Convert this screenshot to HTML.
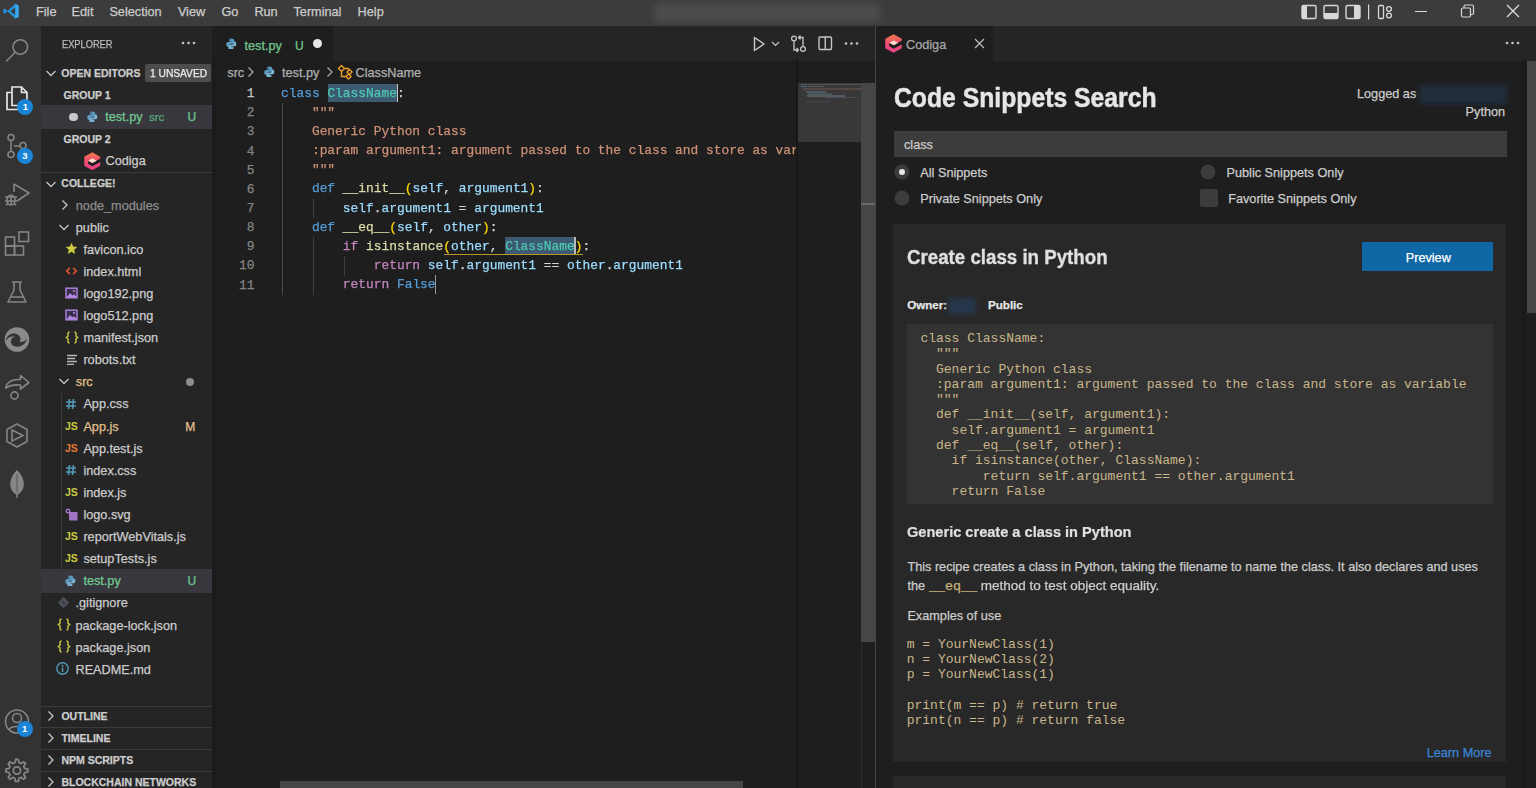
<!DOCTYPE html><html><head><meta charset="utf-8"><style>html,body{margin:0;padding:0;width:1536px;height:788px;overflow:hidden;background:#1e1e1e;}.t{position:absolute;white-space:pre;-webkit-text-stroke:0.25px currentColor;}</style></head><body><div style="position:absolute;left:0.00px;top:0.00px;width:1536.00px;height:26.00px;background:#3c3c3c;"></div>
<div style="position:absolute;left:0.00px;top:26.00px;width:41.00px;height:762.00px;background:#333333;"></div>
<div style="position:absolute;left:41.00px;top:26.00px;width:171.00px;height:762.00px;background:#252526;"></div>
<div style="position:absolute;left:212.00px;top:26.00px;width:663.00px;height:762.00px;background:#1e1e1e;"></div>
<div style="position:absolute;left:212.00px;top:26.00px;width:663.00px;height:35.00px;background:#252526;"></div>
<div style="position:absolute;left:212.00px;top:26.00px;width:121.00px;height:35.00px;background:#1e1e1e;"></div>
<div style="position:absolute;left:875.00px;top:26.00px;width:661.00px;height:762.00px;background:#1e1e1e;"></div>
<div style="position:absolute;left:875.00px;top:26.00px;width:661.00px;height:35.00px;background:#252526;"></div>
<div style="position:absolute;left:875.00px;top:26.00px;width:118.00px;height:35.00px;background:#1e1e1e;"></div>
<div style="position:absolute;left:874.50px;top:26.00px;width:1.00px;height:762.00px;background:#444444;"></div>
<svg style="position:absolute;left:1.50px;top:2.00px;" width="20" height="20" viewBox="0 0 20 20"><g transform="scale(0.92)"><path d="M14.5 2 L18 3.8 V16.2 L14.5 18 L6 10.2 L2.8 12.8 L1.5 12 V8 L2.8 7.2 L6 9.8 Z M14.5 6 L9 10 L14.5 14 Z" fill="#2493dd" fill-rule="evenodd"/><path d="M14.5 2 L18 3.8 V16.2 L14.5 18 Z" fill="#3aa8f0"/></g></svg>
<div class="t" style="left:36.00px;top:6px;font-size:12.7px;line-height:12.7px;color:#cccccc;font-family:'Liberation Sans', sans-serif;">File</div>
<div class="t" style="left:71.60px;top:6px;font-size:12.7px;line-height:12.7px;color:#cccccc;font-family:'Liberation Sans', sans-serif;">Edit</div>
<div class="t" style="left:109.40px;top:6px;font-size:12.7px;line-height:12.7px;color:#cccccc;font-family:'Liberation Sans', sans-serif;">Selection</div>
<div class="t" style="left:177.90px;top:6px;font-size:12.7px;line-height:12.7px;color:#cccccc;font-family:'Liberation Sans', sans-serif;">View</div>
<div class="t" style="left:221.40px;top:6px;font-size:12.7px;line-height:12.7px;color:#cccccc;font-family:'Liberation Sans', sans-serif;">Go</div>
<div class="t" style="left:254.40px;top:6px;font-size:12.7px;line-height:12.7px;color:#cccccc;font-family:'Liberation Sans', sans-serif;">Run</div>
<div class="t" style="left:293.50px;top:6px;font-size:12.7px;line-height:12.7px;color:#cccccc;font-family:'Liberation Sans', sans-serif;">Terminal</div>
<div class="t" style="left:357.60px;top:6px;font-size:12.7px;line-height:12.7px;color:#cccccc;font-family:'Liberation Sans', sans-serif;">Help</div>
<div style="position:absolute;left:654px;top:3px;width:226px;height:19px;background:#4c4c4c;filter:blur(3px);border-radius:3px"></div>
<svg style="position:absolute;left:1300.00px;top:4.00px;" width="96" height="16" viewBox="0 0 96 16"><rect x="2" y="1.5" width="14" height="13" rx="1.5" fill="none" stroke="#d8d8d8" stroke-width="1.4"/><rect x="2" y="1.5" width="5" height="13" fill="#d8d8d8"/><rect x="24" y="1.5" width="14" height="13" rx="1.5" fill="none" stroke="#d8d8d8" stroke-width="1.4"/><rect x="24" y="9" width="14" height="5.5" fill="#d8d8d8"/><rect x="46" y="1.5" width="14" height="13" rx="1.5" fill="none" stroke="#d8d8d8" stroke-width="1.4"/><rect x="54" y="1.5" width="6" height="13" fill="#d8d8d8"/><rect x="68" y="0.5" width="1.2" height="15" fill="#d8d8d8"/><rect x="78.5" y="1.5" width="5" height="13" rx="1" fill="none" stroke="#d8d8d8" stroke-width="1.3"/><circle cx="89" cy="5" r="2.4" fill="none" stroke="#d8d8d8" stroke-width="1.3"/><circle cx="89" cy="11.5" r="2.4" fill="none" stroke="#d8d8d8" stroke-width="1.3"/></svg>
<div style="position:absolute;left:1415.00px;top:10.50px;width:12.00px;height:1.20px;background:#d8d8d8;"></div>
<svg style="position:absolute;left:1459.00px;top:3.00px;" width="18" height="18" viewBox="0 0 18 18"><rect x="2.5" y="5" width="9" height="9" rx="1.5" fill="none" stroke="#d8d8d8" stroke-width="1.2"/><path d="M5 5 V3.5 A1.5 1.5 0 0 1 6.5 2 H13 A1.5 1.5 0 0 1 14.5 3.5 V10 A1.5 1.5 0 0 1 13 11.5 H11.5" fill="none" stroke="#d8d8d8" stroke-width="1.2"/></svg>
<svg style="position:absolute;left:1505.00px;top:3.00px;" width="16" height="16" viewBox="0 0 16 16"><path d="M2 2 L14 14 M14 2 L2 14" stroke="#d8d8d8" stroke-width="1.4"/></svg>
<svg style="position:absolute;left:5.00px;top:35.00px;" width="26" height="28" viewBox="0 0 26 28"><circle cx="15.3" cy="12" r="7.3" fill="none" stroke="#858585" stroke-width="1.6"/><path d="M10 17.5 L1.5 26" fill="none" stroke="#858585" stroke-width="1.6" stroke-linecap="round"/></svg>
<svg style="position:absolute;left:4.00px;top:85.00px;" width="26" height="28" viewBox="0 0 26 28"><path d="M7.5 7.5 H3 V24.5 H14 V20.5" fill="none" stroke="#e6e6e6" stroke-width="1.7"/><path d="M8 2 H17.5 L23 7.5 V20.5 H8 Z M17.5 2 V7.5 H23" fill="none" stroke="#e6e6e6" stroke-width="1.7"/></svg>
<svg style="position:absolute;left:4.00px;top:132.00px;" width="26" height="28" viewBox="0 0 26 28"><circle cx="7" cy="5.5" r="3" fill="none" stroke="#858585" stroke-width="1.6"/><circle cx="7" cy="22.5" r="3" fill="none" stroke="#858585" stroke-width="1.6"/><circle cx="19" cy="13.5" r="3" fill="none" stroke="#858585" stroke-width="1.6"/><path d="M7 8.5 V19.5 M10 14 H16" fill="none" stroke="#858585" stroke-width="1.6"/></svg>
<svg style="position:absolute;left:3.00px;top:180.00px;" width="28" height="28" viewBox="0 0 28 28"><path d="M11 4 L26 13 L14 21" fill="none" stroke="#858585" stroke-width="1.6" stroke-linejoin="round"/><path d="M11 4 V12" fill="none" stroke="#858585" stroke-width="1.6"/><ellipse cx="8" cy="20" rx="4" ry="5" fill="none" stroke="#858585" stroke-width="1.6"/><path d="M2 17 H14 M2 21 H14 M3 25 L5 23.5 M13 25 L11 23.5 M8 15 V25" fill="none" stroke="#858585" stroke-width="1.6" stroke-width="1.3"/></svg>
<svg style="position:absolute;left:4.00px;top:229.00px;" width="28" height="28" viewBox="0 0 28 28"><rect x="1.5" y="8" width="9" height="9" fill="none" stroke="#858585" stroke-width="1.6"/><rect x="1.5" y="17" width="9" height="9" fill="none" stroke="#858585" stroke-width="1.6"/><rect x="10.5" y="17" width="9" height="9" fill="none" stroke="#858585" stroke-width="1.6"/><rect x="15" y="3" width="9.5" height="9.5" fill="none" stroke="#858585" stroke-width="1.6"/></svg>
<svg style="position:absolute;left:5.00px;top:279.50px;" width="26" height="26" viewBox="0 0 26 26"><path d="M7 2 H17 M9 2 V10 L3 22 H21 L15 10 V2" fill="none" stroke="#858585" stroke-width="1.6" stroke-linejoin="round"/><path d="M5 17 H19" fill="none" stroke="#858585" stroke-width="1.6"/></svg>
<svg style="position:absolute;left:3.00px;top:325.00px;" width="30" height="30" viewBox="0 0 30 30"><circle cx="14" cy="14.5" r="12.3" fill="#8a8a8a"/><path d="M3 16 C3.5 10 9 7.5 13.5 9 C17.5 10.5 18.5 14.5 16.5 17 C19.5 17.5 22.5 16 24 13.5 C23 19 18 22.5 12.5 21.5 C9.5 21 7.5 18.5 8 15.5 C8.3 13.5 10 12 12 12 C8.5 10.5 4.5 12.5 3 16 Z" fill="#333333"/></svg>
<svg style="position:absolute;left:3.00px;top:372.00px;" width="28" height="28" viewBox="0 0 28 28"><path d="M2.5 16 C4 9.5 10 7 17.5 7.5 V3.5 L26 10.5 L17.5 17 V13 C11 12.5 6.5 13.5 2.5 16 Z" fill="none" stroke="#858585" stroke-width="1.6" stroke-linejoin="round"/><circle cx="11.5" cy="23.5" r="3.6" fill="none" stroke="#858585" stroke-width="1.6"/></svg>
<svg style="position:absolute;left:4.00px;top:422.00px;" width="26" height="28" viewBox="0 0 26 28"><path d="M13 2 L23 7.5 V19.5 L13 25 L3 19.5 V7.5 Z" fill="none" stroke="#858585" stroke-width="1.6"/><path d="M8 8 L19 13.5 L8 19 Z M8 8 V19" fill="none" stroke="#858585" stroke-width="1.6"/></svg>
<svg style="position:absolute;left:6.00px;top:468.00px;" width="22" height="32" viewBox="0 0 22 32"><path d="M11 2 C5 8 3.5 14 4.5 19 C5.5 23.5 9 26 11 27 C13 26 16.5 23.5 17.5 19 C18.5 14 17 8 11 2 Z" fill="#858585"/><rect x="10.3" y="20" width="1.4" height="10" fill="#858585"/><path d="M11 6 V24" stroke="#5a5a5a" stroke-width="1"/></svg>
<svg style="position:absolute;left:3.00px;top:707.00px;" width="30" height="30" viewBox="0 0 30 30"><circle cx="14" cy="14.5" r="11.5" fill="none" stroke="#858585" stroke-width="1.6"/><circle cx="14" cy="11" r="4.5" fill="none" stroke="#858585" stroke-width="1.6"/><path d="M6 22.5 C8 18.5 20 18.5 22 22.5" fill="none" stroke="#858585" stroke-width="1.6"/></svg>
<svg style="position:absolute;left:2.00px;top:755.50px;" width="30" height="30" viewBox="0 0 30 30"><g transform="translate(14.9 14.5) scale(1.13) translate(-12.9 -11.5)"><path d="M12 1.5 L14.2 1.8 L14.8 4.6 L16.6 5.4 L19 3.8 L20.6 5.4 L19 7.8 L19.8 9.6 L22.6 10.2 V12.8 L19.8 13.4 L19 15.2 L20.6 17.6 L19 19.2 L16.6 17.6 L14.8 18.4 L14.2 21.2 H11.6 L11 18.4 L9.2 17.6 L6.8 19.2 L5.2 17.6 L6.8 15.2 L6 13.4 L3.2 12.8 V10.2 L6 9.6 L6.8 7.8 L5.2 5.4 L6.8 3.8 L9.2 5.4 L11 4.6 Z" fill="none" stroke="#858585" stroke-width="1.6" stroke-width="1.5" stroke-linejoin="round"/><circle cx="12.9" cy="11.5" r="3.2" fill="none" stroke="#858585" stroke-width="1.6" stroke-width="1.5"/></g></svg>
<div style="position:absolute;left:17.4px;top:98.6px;width:16px;height:16px;border-radius:8px;background:#1a85d6;color:#fff;font:bold 9.5px/16px 'Liberation Sans',sans-serif;text-align:center">1</div>
<div style="position:absolute;left:17.0px;top:148.0px;width:16px;height:16px;border-radius:8px;background:#1a85d6;color:#fff;font:bold 9.5px/16px 'Liberation Sans',sans-serif;text-align:center">3</div>
<div style="position:absolute;left:16.7px;top:720.7px;width:16px;height:16px;border-radius:8px;background:#1a85d6;color:#fff;font:bold 9.5px/16px 'Liberation Sans',sans-serif;text-align:center">1</div>
<div class="t" style="left:61.70px;top:39px;font-size:10.6px;line-height:10.6px;color:#bbbbbb;font-family:'Liberation Sans', sans-serif;transform:scaleX(0.875);transform-origin:0 0;">EXPLORER</div>
<svg style="position:absolute;left:180.00px;top:38.00px;" width="18" height="10" viewBox="0 0 18 10"><circle cx="3" cy="5" r="1.3" fill="#c5c5c5"/><circle cx="8.5" cy="5" r="1.3" fill="#c5c5c5"/><circle cx="14" cy="5" r="1.3" fill="#c5c5c5"/></svg>
<div style="position:absolute;left:41.00px;top:105.30px;width:171.00px;height:23.30px;background:#37373d;"></div>
<div style="position:absolute;left:41.00px;top:569.40px;width:171.00px;height:23.30px;background:#37373d;"></div>
<div style="position:absolute;left:41.00px;top:172.00px;width:171.00px;height:1.00px;background:#3b3b3d;"></div>
<div style="position:absolute;left:41.00px;top:705.70px;width:171.00px;height:1.00px;background:#3b3b3d;"></div>
<div style="position:absolute;left:41.00px;top:727.30px;width:171.00px;height:1.00px;background:#3b3b3d;"></div>
<div style="position:absolute;left:41.00px;top:749.40px;width:171.00px;height:1.00px;background:#3b3b3d;"></div>
<div style="position:absolute;left:41.00px;top:771.30px;width:171.00px;height:1.00px;background:#3b3b3d;"></div>
<svg style="position:absolute;left:45.00px;top:68.11px;" width="12" height="10" viewBox="0 0 12 10"><path d="M1.5 3 L6 7.5 L10.5 3" fill="none" stroke="#c5c5c5" stroke-width="1.3"/></svg>
<div class="t" style="left:61.30px;top:68px;font-size:10.5px;line-height:10.5px;color:#cccccc;font-family:'Liberation Sans', sans-serif;font-weight:bold;">OPEN EDITORS</div>
<div style="position:absolute;left:145.00px;top:63.80px;width:65.50px;height:18.20px;background:#4d4d4d;border-radius:2px"></div>
<div class="t" style="left:149.80px;top:68px;font-size:10.8px;line-height:10.8px;color:#ececec;font-family:'Liberation Sans', sans-serif;transform:scaleX(0.945);transform-origin:0 0;">1 UNSAVED</div>
<div class="t" style="left:63.60px;top:90px;font-size:10.5px;line-height:10.5px;color:#cccccc;font-family:'Liberation Sans', sans-serif;font-weight:bold;">GROUP 1</div>
<div style="position:absolute;left:69px;top:112.7px;width:8.5px;height:8.5px;border-radius:5px;background:#c8c8c8"></div>
<svg style="position:absolute;left:87.00px;top:110.50px;" width="11" height="11" viewBox="0 0 11 11"><g transform="scale(0.880)"><path d="M5.8 0.5 C3.5 0.5 3.6 1.5 3.6 2.6 V4 H6.2 V4.6 H2.4 C1 4.6 0.3 5.7 0.3 7.3 C0.3 9 1 9.9 2.3 9.9 H3.3 V8.4 C3.3 7.3 4.2 6.5 5.3 6.5 H7.8 C8.7 6.5 9.3 5.9 9.3 5 V2.6 C9.3 1.5 8.3 0.5 5.8 0.5 Z M4.8 1.4 A0.5 0.5 0 1 1 4.79 1.4 Z" fill="#5a9cc4"/><path d="M6.2 13.5 C8.5 13.5 8.4 12.5 8.4 11.4 V10 H5.8 V9.4 H9.6 C11 9.4 11.7 8.3 11.7 6.7 C11.7 5 11 4.1 9.7 4.1 H8.7 V5.6 C8.7 6.7 7.8 7.5 6.7 7.5 H4.2 C3.3 7.5 2.7 8.1 2.7 9 V11.4 C2.7 12.5 3.7 13.5 6.2 13.5 Z" fill="#7ab2d2"/></g></svg>
<div class="t" style="left:105.20px;top:111px;font-size:12.7px;line-height:12.7px;color:#73c991;font-family:'Liberation Sans', sans-serif;">test.py</div>
<div class="t" style="left:148.90px;top:112px;font-size:11.5px;line-height:11.5px;color:#5fa57a;font-family:'Liberation Sans', sans-serif;">src</div>
<div class="t" style="left:187.40px;top:111px;font-size:12px;line-height:12px;color:#73c991;font-family:'Liberation Sans', sans-serif;">U</div>
<div class="t" style="left:63.60px;top:134px;font-size:10.5px;line-height:10.5px;color:#cccccc;font-family:'Liberation Sans', sans-serif;font-weight:bold;">GROUP 2</div>
<svg style="position:absolute;left:82.60px;top:152.00px;" width="18.5" height="18.5" viewBox="0 0 18.5 18.5"><defs><linearGradient id="cg82" x1="0" y1="0" x2="0" y2="1"><stop offset="0" stop-color="#f47a4a"/><stop offset="0.45" stop-color="#ee4f6f"/><stop offset="1" stop-color="#e8408a"/></linearGradient></defs><g transform="scale(1.028)"><path d="M9 0.3 L16.8 4.6 V13.4 L9 17.7 L1.2 13.4 V4.6 Z" fill="url(#cg82)"/><path d="M17.2 6.2 L9.2 10.6 L5 8.4 V11.6 L9.2 13.9 L17.2 9.6 Z" fill="#1e1e1e"/><path d="M5 8.4 L9.2 6.2 L13.4 8.4 L9.2 10.6 Z" fill="#f8dccc"/></g></svg>
<div class="t" style="left:105.50px;top:155px;font-size:12.7px;line-height:12.7px;color:#cccccc;font-family:'Liberation Sans', sans-serif;">Codiga</div>
<svg style="position:absolute;left:45.00px;top:178.61px;" width="12" height="10" viewBox="0 0 12 10"><path d="M1.5 3 L6 7.5 L10.5 3" fill="none" stroke="#c5c5c5" stroke-width="1.3"/></svg>
<div class="t" style="left:61.30px;top:178px;font-size:10.5px;line-height:10.5px;color:#cccccc;font-family:'Liberation Sans', sans-serif;font-weight:bold;">COLLEGE!</div>
<svg style="position:absolute;left:60.00px;top:199.10px;" width="10" height="12" viewBox="0 0 10 12"><path d="M2.5 1.5 L7 6 L2.5 10.5" fill="none" stroke="#c5c5c5" stroke-width="1.3"/></svg>
<div class="t" style="left:75.80px;top:200px;font-size:12.7px;line-height:12.7px;color:#8c8c8c;font-family:'Liberation Sans', sans-serif;">node_modules</div>
<svg style="position:absolute;left:58.00px;top:221.70px;" width="12" height="10" viewBox="0 0 12 10"><path d="M1.5 3 L6 7.5 L10.5 3" fill="none" stroke="#c5c5c5" stroke-width="1.3"/></svg>
<div class="t" style="left:75.80px;top:222px;font-size:12.7px;line-height:12.7px;color:#cccccc;font-family:'Liberation Sans', sans-serif;">public</div>
<svg style="position:absolute;left:64.50px;top:242.30px;" width="13" height="13" viewBox="0 0 13 13"><path d="M6.5 0.8 L8.2 4.6 L12.3 5 L9.2 7.8 L10.1 11.9 L6.5 9.8 L2.9 11.9 L3.8 7.8 L0.7 5 L4.8 4.6 Z" fill="#cbcb41"/></svg>
<div class="t" style="left:83.40px;top:244px;font-size:12.7px;line-height:12.7px;color:#cccccc;font-family:'Liberation Sans', sans-serif;">favicon.ico</div>
<svg style="position:absolute;left:64.50px;top:265.90px;" width="13" height="10" viewBox="0 0 13 10"><path d="M4.8 1.8 L1.8 5 L4.8 8.2 M8.2 1.8 L11.2 5 L8.2 8.2" fill="none" stroke="#d9502e" stroke-width="1.8"/></svg>
<div class="t" style="left:83.40px;top:266px;font-size:12.7px;line-height:12.7px;color:#cccccc;font-family:'Liberation Sans', sans-serif;">index.html</div>
<svg style="position:absolute;left:64.50px;top:286.50px;" width="13" height="12" viewBox="0 0 13 12"><rect x="1" y="1.2" width="11" height="9.6" fill="#3a2f4a" stroke="#a47ad0" stroke-width="1.6"/><path d="M1.5 10.5 L5 6 L7.5 8.5 L9 7 L12 10.5 Z" fill="#b48ae0"/><circle cx="9" cy="4" r="1.1" fill="#b48ae0"/></svg>
<div class="t" style="left:83.40px;top:288px;font-size:12.7px;line-height:12.7px;color:#cccccc;font-family:'Liberation Sans', sans-serif;">logo192.png</div>
<svg style="position:absolute;left:64.50px;top:308.60px;" width="13" height="12" viewBox="0 0 13 12"><rect x="1" y="1.2" width="11" height="9.6" fill="#3a2f4a" stroke="#a47ad0" stroke-width="1.6"/><path d="M1.5 10.5 L5 6 L7.5 8.5 L9 7 L12 10.5 Z" fill="#b48ae0"/><circle cx="9" cy="4" r="1.1" fill="#b48ae0"/></svg>
<div class="t" style="left:83.40px;top:310px;font-size:12.7px;line-height:12.7px;color:#cccccc;font-family:'Liberation Sans', sans-serif;">logo512.png</div>
<svg style="position:absolute;left:64.50px;top:330.70px;" width="14" height="13" viewBox="0 0 14 13"><path d="M4.5 1 C3 1 3 1.8 3 3 V4.6 C3 5.6 2.4 6.5 0.6 6.5 C2.4 6.5 3 7.4 3 8.4 V10 C3 11.2 3 12 4.5 12 M9.5 1 C11 1 11 1.8 11 3 V4.6 C11 5.6 11.6 6.5 13.4 6.5 C11.6 6.5 11 7.4 11 8.4 V10 C11 11.2 11 12 9.5 12" fill="none" stroke="#cbcb41" stroke-width="1.4"/></svg>
<div class="t" style="left:83.40px;top:332px;font-size:12.7px;line-height:12.7px;color:#cccccc;font-family:'Liberation Sans', sans-serif;">manifest.json</div>
<svg style="position:absolute;left:65.50px;top:354.30px;" width="12" height="11" viewBox="0 0 12 11"><path d="M1 1.5 H11 M1 4.5 H9 M1 7.5 H11 M1 10.5 H8" stroke="#b8b8b8" stroke-width="1.3"/></svg>
<div class="t" style="left:83.40px;top:354px;font-size:12.7px;line-height:12.7px;color:#cccccc;font-family:'Liberation Sans', sans-serif;">robots.txt</div>
<svg style="position:absolute;left:58.00px;top:376.40px;" width="12" height="10" viewBox="0 0 12 10"><path d="M1.5 3 L6 7.5 L10.5 3" fill="none" stroke="#c5c5c5" stroke-width="1.3"/></svg>
<div class="t" style="left:75.80px;top:376px;font-size:12.7px;line-height:12.7px;color:#e2c08d;font-family:'Liberation Sans', sans-serif;">src</div>
<div style="position:absolute;left:186px;top:377.9px;width:8px;height:8px;border-radius:4px;background:#8e8e8e"></div>
<div style="position:absolute;left:61.20px;top:393.00px;width:1.00px;height:198.90px;background:#3a3a3a;"></div>
<svg style="position:absolute;left:65.00px;top:398.00px;" width="12" height="12" viewBox="0 0 12 12"><path d="M4.5 1 L3.5 11 M8.5 1 L7.5 11 M1 4 H11 M1 8 H11" stroke="#519aba" stroke-width="1.6"/></svg>
<div class="t" style="left:83.40px;top:398px;font-size:12.7px;line-height:12.7px;color:#cccccc;font-family:'Liberation Sans', sans-serif;">App.css</div>
<svg style="position:absolute;left:65.00px;top:419.60px;" width="16" height="12" viewBox="0 0 16 12"><text x="0" y="10" font-family="Liberation Sans" font-weight="bold" font-size="10.5" fill="#cbcb41">JS</text></svg>
<div class="t" style="left:83.40px;top:421px;font-size:12.7px;line-height:12.7px;color:#e2c08d;font-family:'Liberation Sans', sans-serif;">App.js</div>
<div class="t" style="left:185.20px;top:421px;font-size:12px;line-height:12px;color:#e2c08d;font-family:'Liberation Sans', sans-serif;">M</div>
<svg style="position:absolute;left:65.00px;top:441.70px;" width="16" height="12" viewBox="0 0 16 12"><text x="0" y="10" font-family="Liberation Sans" font-weight="bold" font-size="10.5" fill="#e37933">JS</text></svg>
<div class="t" style="left:83.40px;top:443px;font-size:12.7px;line-height:12.7px;color:#cccccc;font-family:'Liberation Sans', sans-serif;">App.test.js</div>
<svg style="position:absolute;left:65.00px;top:464.30px;" width="12" height="12" viewBox="0 0 12 12"><path d="M4.5 1 L3.5 11 M8.5 1 L7.5 11 M1 4 H11 M1 8 H11" stroke="#519aba" stroke-width="1.6"/></svg>
<div class="t" style="left:83.40px;top:465px;font-size:12.7px;line-height:12.7px;color:#cccccc;font-family:'Liberation Sans', sans-serif;">index.css</div>
<svg style="position:absolute;left:65.00px;top:485.90px;" width="16" height="12" viewBox="0 0 16 12"><text x="0" y="10" font-family="Liberation Sans" font-weight="bold" font-size="10.5" fill="#cbcb41">JS</text></svg>
<div class="t" style="left:83.40px;top:487px;font-size:12.7px;line-height:12.7px;color:#cccccc;font-family:'Liberation Sans', sans-serif;">index.js</div>
<svg style="position:absolute;left:64.50px;top:507.50px;" width="13" height="13" viewBox="0 0 13 13"><rect x="4" y="4" width="8.5" height="8.5" fill="#a074c4"/><circle cx="3" cy="3" r="2.5" fill="#a074c4"/><circle cx="3" cy="3" r="1.1" fill="#252526"/></svg>
<div class="t" style="left:83.40px;top:509px;font-size:12.7px;line-height:12.7px;color:#cccccc;font-family:'Liberation Sans', sans-serif;">logo.svg</div>
<svg style="position:absolute;left:65.00px;top:530.10px;" width="16" height="12" viewBox="0 0 16 12"><text x="0" y="10" font-family="Liberation Sans" font-weight="bold" font-size="10.5" fill="#cbcb41">JS</text></svg>
<div class="t" style="left:83.40px;top:531px;font-size:12.7px;line-height:12.7px;color:#cccccc;font-family:'Liberation Sans', sans-serif;">reportWebVitals.js</div>
<svg style="position:absolute;left:65.00px;top:552.20px;" width="16" height="12" viewBox="0 0 16 12"><text x="0" y="10" font-family="Liberation Sans" font-weight="bold" font-size="10.5" fill="#cbcb41">JS</text></svg>
<div class="t" style="left:83.40px;top:553px;font-size:12.7px;line-height:12.7px;color:#cccccc;font-family:'Liberation Sans', sans-serif;">setupTests.js</div>
<svg style="position:absolute;left:65.00px;top:574.80px;" width="11" height="11" viewBox="0 0 11 11"><g transform="scale(0.880)"><path d="M5.8 0.5 C3.5 0.5 3.6 1.5 3.6 2.6 V4 H6.2 V4.6 H2.4 C1 4.6 0.3 5.7 0.3 7.3 C0.3 9 1 9.9 2.3 9.9 H3.3 V8.4 C3.3 7.3 4.2 6.5 5.3 6.5 H7.8 C8.7 6.5 9.3 5.9 9.3 5 V2.6 C9.3 1.5 8.3 0.5 5.8 0.5 Z M4.8 1.4 A0.5 0.5 0 1 1 4.79 1.4 Z" fill="#5a9cc4"/><path d="M6.2 13.5 C8.5 13.5 8.4 12.5 8.4 11.4 V10 H5.8 V9.4 H9.6 C11 9.4 11.7 8.3 11.7 6.7 C11.7 5 11 4.1 9.7 4.1 H8.7 V5.6 C8.7 6.7 7.8 7.5 6.7 7.5 H4.2 C3.3 7.5 2.7 8.1 2.7 9 V11.4 C2.7 12.5 3.7 13.5 6.2 13.5 Z" fill="#7ab2d2"/></g></svg>
<div class="t" style="left:83.40px;top:575px;font-size:12.7px;line-height:12.7px;color:#73c991;font-family:'Liberation Sans', sans-serif;">test.py</div>
<div class="t" style="left:187.40px;top:575px;font-size:12px;line-height:12px;color:#73c991;font-family:'Liberation Sans', sans-serif;">U</div>
<svg style="position:absolute;left:56.50px;top:595.90px;" width="13" height="13" viewBox="0 0 13 13"><path d="M6.5 0.8 L12.2 6.5 L6.5 12.2 L0.8 6.5 Z" fill="#4b5056"/><path d="M4.8 4.8 L8 8" stroke="#2e3236" stroke-width="1.2"/></svg>
<div class="t" style="left:75.50px;top:597px;font-size:12.7px;line-height:12.7px;color:#cccccc;font-family:'Liberation Sans', sans-serif;">.gitignore</div>
<svg style="position:absolute;left:56.50px;top:618.00px;" width="14" height="13" viewBox="0 0 14 13"><path d="M4.5 1 C3 1 3 1.8 3 3 V4.6 C3 5.6 2.4 6.5 0.6 6.5 C2.4 6.5 3 7.4 3 8.4 V10 C3 11.2 3 12 4.5 12 M9.5 1 C11 1 11 1.8 11 3 V4.6 C11 5.6 11.6 6.5 13.4 6.5 C11.6 6.5 11 7.4 11 8.4 V10 C11 11.2 11 12 9.5 12" fill="none" stroke="#cbcb41" stroke-width="1.4"/></svg>
<div class="t" style="left:75.50px;top:620px;font-size:12.7px;line-height:12.7px;color:#cccccc;font-family:'Liberation Sans', sans-serif;">package-lock.json</div>
<svg style="position:absolute;left:56.50px;top:640.10px;" width="14" height="13" viewBox="0 0 14 13"><path d="M4.5 1 C3 1 3 1.8 3 3 V4.6 C3 5.6 2.4 6.5 0.6 6.5 C2.4 6.5 3 7.4 3 8.4 V10 C3 11.2 3 12 4.5 12 M9.5 1 C11 1 11 1.8 11 3 V4.6 C11 5.6 11.6 6.5 13.4 6.5 C11.6 6.5 11 7.4 11 8.4 V10 C11 11.2 11 12 9.5 12" fill="none" stroke="#cbcb41" stroke-width="1.4"/></svg>
<div class="t" style="left:75.50px;top:642px;font-size:12.7px;line-height:12.7px;color:#cccccc;font-family:'Liberation Sans', sans-serif;">package.json</div>
<svg style="position:absolute;left:56.30px;top:662.20px;" width="13" height="13" viewBox="0 0 13 13"><circle cx="6.5" cy="6.5" r="5.7" fill="none" stroke="#519aba" stroke-width="1.4"/><rect x="5.8" y="5.5" width="1.5" height="4.5" fill="#519aba"/><circle cx="6.55" cy="3.7" r="0.9" fill="#519aba"/></svg>
<div class="t" style="left:75.50px;top:664px;font-size:12.7px;line-height:12.7px;color:#cccccc;font-family:'Liberation Sans', sans-serif;">README.md</div>
<svg style="position:absolute;left:46.00px;top:710.40px;" width="10" height="12" viewBox="0 0 10 12"><path d="M2.5 1.5 L7 6 L2.5 10.5" fill="none" stroke="#c5c5c5" stroke-width="1.3"/></svg>
<div class="t" style="left:61.40px;top:711px;font-size:10.5px;line-height:10.5px;color:#cccccc;font-family:'Liberation Sans', sans-serif;font-weight:bold;">OUTLINE</div>
<svg style="position:absolute;left:46.00px;top:732.20px;" width="10" height="12" viewBox="0 0 10 12"><path d="M2.5 1.5 L7 6 L2.5 10.5" fill="none" stroke="#c5c5c5" stroke-width="1.3"/></svg>
<div class="t" style="left:61.40px;top:733px;font-size:10.5px;line-height:10.5px;color:#cccccc;font-family:'Liberation Sans', sans-serif;font-weight:bold;">TIMELINE</div>
<svg style="position:absolute;left:46.00px;top:754.20px;" width="10" height="12" viewBox="0 0 10 12"><path d="M2.5 1.5 L7 6 L2.5 10.5" fill="none" stroke="#c5c5c5" stroke-width="1.3"/></svg>
<div class="t" style="left:61.40px;top:755px;font-size:10.5px;line-height:10.5px;color:#cccccc;font-family:'Liberation Sans', sans-serif;font-weight:bold;">NPM SCRIPTS</div>
<svg style="position:absolute;left:46.00px;top:776.20px;" width="10" height="12" viewBox="0 0 10 12"><path d="M2.5 1.5 L7 6 L2.5 10.5" fill="none" stroke="#c5c5c5" stroke-width="1.3"/></svg>
<div class="t" style="left:61.40px;top:777px;font-size:10.5px;line-height:10.5px;color:#cccccc;font-family:'Liberation Sans', sans-serif;font-weight:bold;">BLOCKCHAIN NETWORKS</div>
<div style="position:absolute;left:212.00px;top:60.00px;width:4.50px;height:728.00px;background:#1b1b1b;"></div>
<svg style="position:absolute;left:225.50px;top:38.00px;" width="11" height="11" viewBox="0 0 11 11"><g transform="scale(0.880)"><path d="M5.8 0.5 C3.5 0.5 3.6 1.5 3.6 2.6 V4 H6.2 V4.6 H2.4 C1 4.6 0.3 5.7 0.3 7.3 C0.3 9 1 9.9 2.3 9.9 H3.3 V8.4 C3.3 7.3 4.2 6.5 5.3 6.5 H7.8 C8.7 6.5 9.3 5.9 9.3 5 V2.6 C9.3 1.5 8.3 0.5 5.8 0.5 Z M4.8 1.4 A0.5 0.5 0 1 1 4.79 1.4 Z" fill="#5a9cc4"/><path d="M6.2 13.5 C8.5 13.5 8.4 12.5 8.4 11.4 V10 H5.8 V9.4 H9.6 C11 9.4 11.7 8.3 11.7 6.7 C11.7 5 11 4.1 9.7 4.1 H8.7 V5.6 C8.7 6.7 7.8 7.5 6.7 7.5 H4.2 C3.3 7.5 2.7 8.1 2.7 9 V11.4 C2.7 12.5 3.7 13.5 6.2 13.5 Z" fill="#7ab2d2"/></g></svg>
<div class="t" style="left:244.50px;top:40px;font-size:12.7px;line-height:12.7px;color:#73c991;font-family:'Liberation Sans', sans-serif;">test.py</div>
<div class="t" style="left:295.00px;top:40px;font-size:12px;line-height:12px;color:#73c991;font-family:'Liberation Sans', sans-serif;">U</div>
<div style="position:absolute;left:312.5px;top:39.3px;width:9px;height:9px;border-radius:5px;background:#e8e8e8"></div>
<svg style="position:absolute;left:750.00px;top:34.00px;" width="112" height="20" viewBox="0 0 112 20"><path d="M4.5 3.5 L14 10 L4.5 16.5 Z" fill="none" stroke="#c5c5c5" stroke-width="1.5" stroke-linejoin="round"/><path d="M22 8 L25.5 11.5 L29 8" fill="none" stroke="#c5c5c5" stroke-width="1.2"/><circle cx="44" cy="4.5" r="2.4" fill="none" stroke="#c5c5c5" stroke-width="1.3"/><circle cx="53" cy="15" r="2.4" fill="none" stroke="#c5c5c5" stroke-width="1.3"/><path d="M44 7 V16 H48.5 M46.5 14 L48.5 16 L46.5 18 M53 12.5 V3.5 H48.5 M50.5 1.5 L48.5 3.5 L50.5 5.5" fill="none" stroke="#c5c5c5" stroke-width="1.3"/><rect x="69" y="3" width="12.5" height="12.5" rx="1" fill="none" stroke="#c5c5c5" stroke-width="1.4"/><path d="M75.25 3 V15.5" stroke="#c5c5c5" stroke-width="1.4"/><circle cx="96" cy="9.5" r="1.3" fill="#c5c5c5"/><circle cx="101.5" cy="9.5" r="1.3" fill="#c5c5c5"/><circle cx="107" cy="9.5" r="1.3" fill="#c5c5c5"/></svg>
<div class="t" style="left:227.30px;top:67px;font-size:12.7px;line-height:12.7px;color:#b0b0b0;font-family:'Liberation Sans', sans-serif;">src</div>
<svg style="position:absolute;left:246.00px;top:66.00px;" width="10" height="12" viewBox="0 0 10 12"><path d="M2.5 1.5 L7 6 L2.5 10.5" fill="none" stroke="#b0b0b0" stroke-width="1.2"/></svg>
<svg style="position:absolute;left:264.00px;top:66.00px;" width="11" height="11" viewBox="0 0 11 11"><g transform="scale(0.880)"><path d="M5.8 0.5 C3.5 0.5 3.6 1.5 3.6 2.6 V4 H6.2 V4.6 H2.4 C1 4.6 0.3 5.7 0.3 7.3 C0.3 9 1 9.9 2.3 9.9 H3.3 V8.4 C3.3 7.3 4.2 6.5 5.3 6.5 H7.8 C8.7 6.5 9.3 5.9 9.3 5 V2.6 C9.3 1.5 8.3 0.5 5.8 0.5 Z M4.8 1.4 A0.5 0.5 0 1 1 4.79 1.4 Z" fill="#5a9cc4"/><path d="M6.2 13.5 C8.5 13.5 8.4 12.5 8.4 11.4 V10 H5.8 V9.4 H9.6 C11 9.4 11.7 8.3 11.7 6.7 C11.7 5 11 4.1 9.7 4.1 H8.7 V5.6 C8.7 6.7 7.8 7.5 6.7 7.5 H4.2 C3.3 7.5 2.7 8.1 2.7 9 V11.4 C2.7 12.5 3.7 13.5 6.2 13.5 Z" fill="#7ab2d2"/></g></svg>
<div class="t" style="left:282.00px;top:67px;font-size:12.7px;line-height:12.7px;color:#b0b0b0;font-family:'Liberation Sans', sans-serif;">test.py</div>
<svg style="position:absolute;left:325.00px;top:66.00px;" width="10" height="12" viewBox="0 0 10 12"><path d="M2.5 1.5 L7 6 L2.5 10.5" fill="none" stroke="#b0b0b0" stroke-width="1.2"/></svg>
<svg style="position:absolute;left:337.00px;top:64.00px;" width="16" height="16" viewBox="0 0 16 16"><path d="M1.5 4.5 L4.5 1.5 L7.5 4.5 L4.5 7.5 Z M10 8 L12.5 5.5 L15 8 L12.5 10.5 Z M9 12.5 L11.5 10 L14 12.5 L11.5 15 Z M7.5 4.5 H10.5 L12.5 5.5 M4.5 7.5 V12.5 H9" fill="none" stroke="#ee9d28" stroke-width="1.4" stroke-linejoin="round"/></svg>
<div class="t" style="left:355.50px;top:67px;font-size:12.7px;line-height:12.7px;color:#b0b0b0;font-family:'Liberation Sans', sans-serif;">ClassName</div>
<div style="position:absolute;left:327.58px;top:83.70px;width:69.57px;height:18.50px;background:#3e5a73;"></div>
<div style="position:absolute;left:396.65px;top:83.70px;width:1.30px;height:18.50px;background:#c8c8c8;"></div>
<div style="position:absolute;left:505.37px;top:236.82px;width:69.57px;height:18.50px;background:#3e5a73;"></div>
<div style="position:absolute;left:574.44px;top:236.82px;width:1.30px;height:18.50px;background:#b8b8b8;"></div>
<div style="position:absolute;left:435.30px;top:275.10px;width:1.10px;height:18.50px;background:#9a9a9a;"></div>
<div style="position:absolute;left:443.53px;top:253.82px;width:139.14px;height:1.20px;background:#b8962a;"></div>
<div style="position:absolute;left:281.70px;top:103.34px;width:1.00px;height:191.40px;background:#4a4a4a;"></div>
<div style="position:absolute;left:312.62px;top:199.04px;width:1.00px;height:19.14px;background:#404040;"></div>
<div style="position:absolute;left:312.62px;top:237.32px;width:1.00px;height:57.42px;background:#404040;"></div>
<div style="position:absolute;left:343.54px;top:256.46px;width:1.00px;height:19.14px;background:#404040;"></div>
<div class="t" style="left:246.77px;top:88px;font-size:12.83px;line-height:12.83px;color:#c6c6c6;font-family:'Liberation Mono', monospace;">1</div>
<div class="t" style="left:246.77px;top:107px;font-size:12.83px;line-height:12.83px;color:#858585;font-family:'Liberation Mono', monospace;">2</div>
<div class="t" style="left:246.77px;top:126px;font-size:12.83px;line-height:12.83px;color:#858585;font-family:'Liberation Mono', monospace;">3</div>
<div class="t" style="left:246.77px;top:146px;font-size:12.83px;line-height:12.83px;color:#858585;font-family:'Liberation Mono', monospace;">4</div>
<div class="t" style="left:246.77px;top:165px;font-size:12.83px;line-height:12.83px;color:#858585;font-family:'Liberation Mono', monospace;">5</div>
<div class="t" style="left:246.77px;top:184px;font-size:12.83px;line-height:12.83px;color:#858585;font-family:'Liberation Mono', monospace;">6</div>
<div class="t" style="left:246.77px;top:203px;font-size:12.83px;line-height:12.83px;color:#858585;font-family:'Liberation Mono', monospace;">7</div>
<div class="t" style="left:246.77px;top:222px;font-size:12.83px;line-height:12.83px;color:#858585;font-family:'Liberation Mono', monospace;">8</div>
<div class="t" style="left:246.77px;top:241px;font-size:12.83px;line-height:12.83px;color:#858585;font-family:'Liberation Mono', monospace;">9</div>
<div class="t" style="left:239.04px;top:260px;font-size:12.83px;line-height:12.83px;color:#858585;font-family:'Liberation Mono', monospace;">10</div>
<div class="t" style="left:239.04px;top:280px;font-size:12.83px;line-height:12.83px;color:#858585;font-family:'Liberation Mono', monospace;">11</div>
<div class="t" style="left:281.20px;top:87px;font-size:13.6px;line-height:13.6px;color:#d4d4d4;font-family:'Liberation Mono', monospace;transform:scaleX(0.9473);transform-origin:0 0;max-width:544px;overflow:hidden;"><span style="color:#569cd6">class</span><span style="color:#d4d4d4"> </span><span style="color:#4ec9b0">ClassName</span><span style="color:#d4d4d4">:</span></div>
<div class="t" style="left:281.20px;top:106px;font-size:13.6px;line-height:13.6px;color:#d4d4d4;font-family:'Liberation Mono', monospace;transform:scaleX(0.9473);transform-origin:0 0;max-width:544px;overflow:hidden;"><span style="color:#ce9178">    &quot;&quot;&quot;</span></div>
<div class="t" style="left:281.20px;top:125px;font-size:13.6px;line-height:13.6px;color:#d4d4d4;font-family:'Liberation Mono', monospace;transform:scaleX(0.9473);transform-origin:0 0;max-width:544px;overflow:hidden;"><span style="color:#ce9178">    Generic Python class</span></div>
<div class="t" style="left:281.20px;top:144px;font-size:13.6px;line-height:13.6px;color:#d4d4d4;font-family:'Liberation Mono', monospace;transform:scaleX(0.9473);transform-origin:0 0;max-width:544px;overflow:hidden;"><span style="color:#ce9178">    :param argument1: argument passed to the class and store as var</span></div>
<div class="t" style="left:281.20px;top:163px;font-size:13.6px;line-height:13.6px;color:#d4d4d4;font-family:'Liberation Mono', monospace;transform:scaleX(0.9473);transform-origin:0 0;max-width:544px;overflow:hidden;"><span style="color:#ce9178">    &quot;&quot;&quot;</span></div>
<div class="t" style="left:281.20px;top:182px;font-size:13.6px;line-height:13.6px;color:#d4d4d4;font-family:'Liberation Mono', monospace;transform:scaleX(0.9473);transform-origin:0 0;max-width:544px;overflow:hidden;"><span style="color:#569cd6">    def</span><span style="color:#d4d4d4"> </span><span style="color:#dcdcaa">__init__</span><span style="color:#ffd700">(</span><span style="color:#9cdcfe">self</span><span style="color:#d4d4d4">, </span><span style="color:#9cdcfe">argument1</span><span style="color:#ffd700">)</span><span style="color:#d4d4d4">:</span></div>
<div class="t" style="left:281.20px;top:202px;font-size:13.6px;line-height:13.6px;color:#d4d4d4;font-family:'Liberation Mono', monospace;transform:scaleX(0.9473);transform-origin:0 0;max-width:544px;overflow:hidden;"><span style="color:#9cdcfe">        self</span><span style="color:#d4d4d4">.</span><span style="color:#9cdcfe">argument1</span><span style="color:#d4d4d4"> = </span><span style="color:#9cdcfe">argument1</span></div>
<div class="t" style="left:281.20px;top:221px;font-size:13.6px;line-height:13.6px;color:#d4d4d4;font-family:'Liberation Mono', monospace;transform:scaleX(0.9473);transform-origin:0 0;max-width:544px;overflow:hidden;"><span style="color:#569cd6">    def</span><span style="color:#d4d4d4"> </span><span style="color:#dcdcaa">__eq__</span><span style="color:#ffd700">(</span><span style="color:#9cdcfe">self</span><span style="color:#d4d4d4">, </span><span style="color:#9cdcfe">other</span><span style="color:#ffd700">)</span><span style="color:#d4d4d4">:</span></div>
<div class="t" style="left:281.20px;top:240px;font-size:13.6px;line-height:13.6px;color:#d4d4d4;font-family:'Liberation Mono', monospace;transform:scaleX(0.9473);transform-origin:0 0;max-width:544px;overflow:hidden;"><span style="color:#c586c0">        if</span><span style="color:#d4d4d4"> </span><span style="color:#dcdcaa">isinstance</span><span style="color:#ffd700">(</span><span style="color:#9cdcfe">other</span><span style="color:#d4d4d4">, </span><span style="color:#4ec9b0">ClassName</span><span style="color:#ffd700">)</span><span style="color:#d4d4d4">:</span></div>
<div class="t" style="left:281.20px;top:259px;font-size:13.6px;line-height:13.6px;color:#d4d4d4;font-family:'Liberation Mono', monospace;transform:scaleX(0.9473);transform-origin:0 0;max-width:544px;overflow:hidden;"><span style="color:#c586c0">            return</span><span style="color:#d4d4d4"> </span><span style="color:#9cdcfe">self</span><span style="color:#d4d4d4">.</span><span style="color:#9cdcfe">argument1</span><span style="color:#d4d4d4"> == </span><span style="color:#9cdcfe">other</span><span style="color:#d4d4d4">.</span><span style="color:#9cdcfe">argument1</span></div>
<div class="t" style="left:281.20px;top:278px;font-size:13.6px;line-height:13.6px;color:#d4d4d4;font-family:'Liberation Mono', monospace;transform:scaleX(0.9473);transform-origin:0 0;max-width:544px;overflow:hidden;"><span style="color:#c586c0">        return</span><span style="color:#d4d4d4"> </span><span style="color:#569cd6">False</span></div>
<div style="position:absolute;left:796.00px;top:60.00px;width:1.50px;height:728.00px;background:#171717;"></div>
<div style="position:absolute;left:797.80px;top:83.30px;width:63.00px;height:59.00px;background:#383838;"></div>
<svg style="position:absolute;left:797.80px;top:83.00px;" width="63" height="24" viewBox="0 0 63 24"><rect x="3" y="1" width="60" height="0.8" fill="#5a6570" opacity=".8"/><rect x="3" y="3" width="6" height="0.9" fill="#569cd6" opacity=".5"/><rect x="10" y="3" width="16" height="0.9" fill="#a0a0a0" opacity=".35"/><rect x="5" y="5.5" width="58" height="1" fill="#ce9178" opacity=".4"/><rect x="8" y="8.5" width="20" height="1" fill="#9cdcfe" opacity=".4"/><rect x="10" y="10.5" width="24" height="1" fill="#9cdcfe" opacity=".35"/><rect x="9" y="12.5" width="38" height="1" fill="#c0d8f0" opacity=".45"/><rect x="28" y="14" width="30" height="0.8" fill="#6a8aa8" opacity=".35"/><rect x="9" y="18.5" width="22" height="0.8" fill="#8a7a9a" opacity=".3"/></svg>
<div style="position:absolute;left:860.50px;top:83.30px;width:14.00px;height:559.00px;background:#464646;"></div>
<div style="position:absolute;left:860.50px;top:203.00px;width:14.00px;height:1.50px;background:#6a6a6a;"></div>
<div style="position:absolute;left:860.50px;top:642.40px;width:1.00px;height:146.00px;background:#2b2b2b;"></div>
<div style="position:absolute;left:280.00px;top:781.00px;width:462.50px;height:7.00px;background:#464646;"></div>
<svg style="position:absolute;left:883.50px;top:33.50px;" width="19" height="19" viewBox="0 0 19 19"><defs><linearGradient id="cg883" x1="0" y1="0" x2="0" y2="1"><stop offset="0" stop-color="#f47a4a"/><stop offset="0.45" stop-color="#ee4f6f"/><stop offset="1" stop-color="#e8408a"/></linearGradient></defs><g transform="scale(1.056)"><path d="M9 0.3 L16.8 4.6 V13.4 L9 17.7 L1.2 13.4 V4.6 Z" fill="url(#cg883)"/><path d="M17.2 6.2 L9.2 10.6 L5 8.4 V11.6 L9.2 13.9 L17.2 9.6 Z" fill="#1e1e1e"/><path d="M5 8.4 L9.2 6.2 L13.4 8.4 L9.2 10.6 Z" fill="#f8dccc"/></g></svg>
<div class="t" style="left:906.00px;top:39px;font-size:12.7px;line-height:12.7px;color:#a8a8a8;font-family:'Liberation Sans', sans-serif;">Codiga</div>
<svg style="position:absolute;left:973.00px;top:37.00px;" width="13" height="13" viewBox="0 0 13 13"><path d="M2 2 L11 11 M11 2 L2 11" stroke="#b8b8b8" stroke-width="1.3"/></svg>
<svg style="position:absolute;left:1504.00px;top:38.00px;" width="18" height="10" viewBox="0 0 18 10"><circle cx="3" cy="5" r="1.3" fill="#c5c5c5"/><circle cx="8.5" cy="5" r="1.3" fill="#c5c5c5"/><circle cx="14" cy="5" r="1.3" fill="#c5c5c5"/></svg>
<div style="position:absolute;left:1521.00px;top:60.00px;width:5.00px;height:728.00px;background:#1b1b1b;"></div>
<div style="position:absolute;left:1526.50px;top:60.70px;width:9.50px;height:252.50px;background:#464646;"></div>
<div class="t" style="left:894.40px;top:84px;font-size:27.8px;line-height:27.8px;color:#e6e6e6;font-family:'Liberation Sans', sans-serif;font-weight:bold;transform:scaleX(0.89);transform-origin:0 0;-webkit-text-stroke:0.5px #e6e6e6;">Code Snippets Search</div>
<div class="t" style="left:1357.00px;top:88px;font-size:12.7px;line-height:12.7px;color:#cccccc;font-family:'Liberation Sans', sans-serif;">Logged as</div>
<div style="position:absolute;left:1419px;top:84.5px;width:88px;height:19.5px;background:#222e3c;filter:blur(2.5px)"></div>
<div class="t" style="left:1465.60px;top:106px;font-size:12.7px;line-height:12.7px;color:#cccccc;font-family:'Liberation Sans', sans-serif;">Python</div>
<div style="position:absolute;left:893.75px;top:130.50px;width:612.75px;height:26.50px;background:#3c3c3c;"></div>
<div class="t" style="left:904.00px;top:139px;font-size:12.7px;line-height:12.7px;color:#cccccc;font-family:'Liberation Sans', sans-serif;">class</div>
<svg style="position:absolute;left:893.60px;top:163.90px;" width="16" height="16" viewBox="0 0 16 16"><circle cx="8" cy="8" r="7.5" fill="#3c3c3c"/><circle cx="8" cy="8" r="3" fill="#e8e8e8"/></svg>
<div class="t" style="left:920.30px;top:167px;font-size:12.7px;line-height:12.7px;color:#cccccc;font-family:'Liberation Sans', sans-serif;">All Snippets</div>
<svg style="position:absolute;left:893.60px;top:189.60px;" width="16" height="16" viewBox="0 0 16 16"><circle cx="8" cy="8" r="7.5" fill="#3c3c3c"/></svg>
<div class="t" style="left:920.30px;top:193px;font-size:12.7px;line-height:12.7px;color:#cccccc;font-family:'Liberation Sans', sans-serif;">Private Snippets Only</div>
<svg style="position:absolute;left:1200.30px;top:163.90px;" width="16" height="16" viewBox="0 0 16 16"><circle cx="8" cy="8" r="7.5" fill="#3c3c3c"/></svg>
<div class="t" style="left:1226.50px;top:167px;font-size:12.7px;line-height:12.7px;color:#cccccc;font-family:'Liberation Sans', sans-serif;">Public Snippets Only</div>
<div style="position:absolute;left:1200.40px;top:189.20px;width:17.60px;height:17.40px;background:#3c3c3c;border-radius:2px"></div>
<div class="t" style="left:1228.20px;top:193px;font-size:12.7px;line-height:12.7px;color:#cccccc;font-family:'Liberation Sans', sans-serif;">Favorite Snippets Only</div>
<div style="position:absolute;left:893.20px;top:224.00px;width:612.60px;height:537.80px;background:#282828;"></div>
<div class="t" style="left:907.20px;top:247px;font-size:20px;line-height:20px;color:#e0e0e0;font-family:'Liberation Sans', sans-serif;font-weight:bold;transform:scaleX(0.935);transform-origin:0 0;-webkit-text-stroke:0.3px #e0e0e0;">Create class in Python</div>
<div style="position:absolute;left:1362.30px;top:242.20px;width:131.10px;height:28.90px;background:#0f67a5;"></div>
<div class="t" style="left:1405.70px;top:252px;font-size:12.7px;line-height:12.7px;color:#ffffff;font-family:'Liberation Sans', sans-serif;">Preview</div>
<div class="t" style="left:907.20px;top:299px;font-size:11.6px;line-height:11.6px;color:#e6e6e6;font-family:'Liberation Sans', sans-serif;font-weight:bold;">Owner:</div>
<div style="position:absolute;left:948px;top:298px;width:28px;height:16px;background:#26364a;filter:blur(2px)"></div>
<div class="t" style="left:988.00px;top:299px;font-size:11.6px;line-height:11.6px;color:#e6e6e6;font-family:'Liberation Sans', sans-serif;font-weight:bold;">Public</div>
<div style="position:absolute;left:907.20px;top:323.90px;width:586.20px;height:180.50px;background:#333333;"></div>
<div class="t" style="left:920.40px;top:332px;font-size:13px;line-height:13px;color:#c9b68c;font-family:'Liberation Mono', monospace;-webkit-text-stroke:0;">class ClassName:</div>
<div class="t" style="left:920.40px;top:347px;font-size:13px;line-height:13px;color:#c9b68c;font-family:'Liberation Mono', monospace;-webkit-text-stroke:0;">  &quot;&quot;&quot;</div>
<div class="t" style="left:920.40px;top:363px;font-size:13px;line-height:13px;color:#c9b68c;font-family:'Liberation Mono', monospace;-webkit-text-stroke:0;">  Generic Python class</div>
<div class="t" style="left:920.40px;top:378px;font-size:13px;line-height:13px;color:#c9b68c;font-family:'Liberation Mono', monospace;-webkit-text-stroke:0;">  :param argument1: argument passed to the class and store as variable</div>
<div class="t" style="left:920.40px;top:393px;font-size:13px;line-height:13px;color:#c9b68c;font-family:'Liberation Mono', monospace;-webkit-text-stroke:0;">  &quot;&quot;&quot;</div>
<div class="t" style="left:920.40px;top:408px;font-size:13px;line-height:13px;color:#c9b68c;font-family:'Liberation Mono', monospace;-webkit-text-stroke:0;">  def __init__(self, argument1):</div>
<div class="t" style="left:920.40px;top:424px;font-size:13px;line-height:13px;color:#c9b68c;font-family:'Liberation Mono', monospace;-webkit-text-stroke:0;">    self.argument1 = argument1</div>
<div class="t" style="left:920.40px;top:439px;font-size:13px;line-height:13px;color:#c9b68c;font-family:'Liberation Mono', monospace;-webkit-text-stroke:0;">  def __eq__(self, other):</div>
<div class="t" style="left:920.40px;top:454px;font-size:13px;line-height:13px;color:#c9b68c;font-family:'Liberation Mono', monospace;-webkit-text-stroke:0;">    if isinstance(other, ClassName):</div>
<div class="t" style="left:920.40px;top:470px;font-size:13px;line-height:13px;color:#c9b68c;font-family:'Liberation Mono', monospace;-webkit-text-stroke:0;">        return self.argument1 == other.argument1</div>
<div class="t" style="left:920.40px;top:485px;font-size:13px;line-height:13px;color:#c9b68c;font-family:'Liberation Mono', monospace;-webkit-text-stroke:0;">    return False</div>
<div class="t" style="left:907.40px;top:524px;font-size:15.2px;line-height:15.2px;color:#e0e0e0;font-family:'Liberation Sans', sans-serif;font-weight:bold;transform:scaleX(0.96);transform-origin:0 0;-webkit-text-stroke:0.2px #e0e0e0;">Generic create a class in Python</div>
<div class="t" style="left:907.40px;top:561px;font-size:12.7px;line-height:12.7px;color:#cccccc;font-family:'Liberation Sans', sans-serif;">This recipe creates a class in Python, taking the filename to name the class. It also declares and uses</div>
<div class="t" style="left:907.40px;top:580px;font-size:12.7px;line-height:12.7px;color:#cccccc;font-family:'Liberation Sans', sans-serif;">the </div>
<div class="t" style="left:929.00px;top:580px;font-size:13.3px;line-height:13.3px;color:#c8b47e;font-family:'Liberation Mono', monospace;">__eq__</div>
<div class="t" style="left:977.00px;top:580px;font-size:12.7px;line-height:12.7px;color:#cccccc;font-family:'Liberation Sans', sans-serif;transform:scaleX(1.065);transform-origin:0 0;"> method to test object equality.</div>
<div class="t" style="left:907.40px;top:610px;font-size:12.7px;line-height:12.7px;color:#cccccc;font-family:'Liberation Sans', sans-serif;">Examples of use</div>
<div class="t" style="left:906.70px;top:638px;font-size:13px;line-height:13px;color:#c9b68c;font-family:'Liberation Mono', monospace;-webkit-text-stroke:0;">m = YourNewClass(1)</div>
<div class="t" style="left:906.70px;top:653px;font-size:13px;line-height:13px;color:#c9b68c;font-family:'Liberation Mono', monospace;-webkit-text-stroke:0;">n = YourNewClass(2)</div>
<div class="t" style="left:906.70px;top:668px;font-size:13px;line-height:13px;color:#c9b68c;font-family:'Liberation Mono', monospace;-webkit-text-stroke:0;">p = YourNewClass(1)</div>
<div class="t" style="left:906.70px;top:699px;font-size:13px;line-height:13px;color:#c9b68c;font-family:'Liberation Mono', monospace;-webkit-text-stroke:0;">print(m == p) # return true</div>
<div class="t" style="left:906.70px;top:714px;font-size:13px;line-height:13px;color:#c9b68c;font-family:'Liberation Mono', monospace;-webkit-text-stroke:0;">print(n == p) # return false</div>
<div class="t" style="left:1426.70px;top:747px;font-size:12.7px;line-height:12.7px;color:#3a85d6;font-family:'Liberation Sans', sans-serif;">Learn More</div>
<div style="position:absolute;left:893.20px;top:776.00px;width:612.60px;height:12.00px;background:#282828;"></div></body></html>
